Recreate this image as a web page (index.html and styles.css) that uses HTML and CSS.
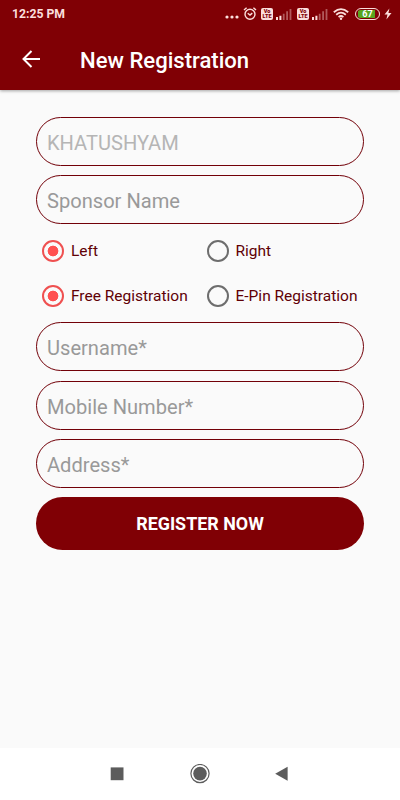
FILE: index.html
```html
<!DOCTYPE html>
<html lang="en">
<head>
    <meta charset="UTF-8">
    <title>New Registration</title>
    <link rel="stylesheet" href="styles.css">
</head>
<body>

    <header class="header">
        <div class="status-bar">
            <span class="time">12:25 PM</span>
            <div class="status-icons">
                <svg class="dots" width="14" height="14" viewBox="0 0 14 14">
                    <circle cx="2" cy="10" r="1.6"/><circle cx="7" cy="10" r="1.6"/><circle cx="12" cy="10" r="1.6"/>
                </svg>
                <svg class="alarm" width="14" height="14" viewBox="0 0 14 14">
                    <circle cx="7" cy="7.2" r="5"/>
                    <path d="M1 3 3.6.7M13 3 10.4.7M4.7 6.3 7 8.1 9.3 6.1"/>
                </svg>
                <span class="volte">Vo<br>LTE</span>
                <svg class="signal" width="16" height="14" viewBox="0 0 16 14">
                    <path d="M0 10h2v3H0zM3.4 8.8h2V13h-2z"/>
                    <path class="weak" d="M6.8 6.7h1.8V13H6.8zM10.2 4.2H12V13h-1.8zM13.6 2h1.8v11h-1.8z"/>
                </svg>
                <span class="volte second">Vo<br>LTE</span>
                <svg class="signal" width="16" height="14" viewBox="0 0 16 14">
                    <path d="M0 10h2v3H0zM3.4 8.8h2V13h-2z"/>
                    <path class="weak" d="M6.8 6.7h1.8V13H6.8zM10.2 4.2H12V13h-1.8zM13.6 2h1.8v11h-1.8z"/>
                </svg>
                <svg class="wifi" width="16" height="14" viewBox="0 0 16 14">
                    <path d="M.8 5.2Q8-1 15.2 5.2M3.2 7.7Q8 3.6 12.8 7.7M5.6 10.1Q8 8 10.4 10.1"/>
                    <circle cx="8" cy="11.8" r="1.2"/>
                </svg>
                <span class="battery">67</span>
                <svg class="bolt" width="8" height="12" viewBox="0 0 8 12">
                    <path d="M5.4.5.5 6.6h3L2.4 11.5 7.5 5.1H4.4z"/>
                </svg>
            </div>
        </div>
        <div class="title-bar">
            <svg class="back" width="20" height="20" viewBox="0 0 20 20">
                <path d="M19 10H2.5M10.5 2l-8 8 8 8"/>
            </svg>
            <h1>New Registration</h1>
        </div>
    </header>

    <form class="form">
        <input class="field filled" type="text" value="KHATUSHYAM" disabled>
        <input class="field" type="text" placeholder="Sponsor Name">
        <div class="options">
            <label><input type="radio" name="side" checked>Left</label>
            <label><input type="radio" name="side">Right</label>
            <label><input type="radio" name="type" checked>Free Registration</label>
            <label><input type="radio" name="type">E-Pin Registration</label>
        </div>
        <input class="field" type="text" placeholder="Username*">
        <input class="field" type="text" placeholder="Mobile Number*">
        <input class="field" type="text" placeholder="Address*">
        <button class="register" type="button">REGISTER NOW</button>
    </form>

    <!-- Android navigation keys -->
    <nav class="nav-bar">
        <svg width="20" height="20" viewBox="0 0 20 20"><path d="M3.7 3.4h12.8v12.8H3.7z"/></svg>
        <svg width="20" height="20" viewBox="0 0 20 20">
            <circle class="ring" cx="10" cy="9.6" r="9.1"/>
            <circle cx="10" cy="9.6" r="6.8"/>
        </svg>
        <svg width="20" height="20" viewBox="0 0 20 20"><path d="M3.2 9.7 15.6 2.8v14z"/></svg>
    </nav>

</body>
</html>
```
FILE: styles.css
```css
* {
    box-sizing: border-box;
}

body {
    margin: 0;
    height: 100vh;
    display: flex;
    flex-direction: column;
    background: #fafafa;
    font-family: Roboto, sans-serif;
    overflow: hidden;
}

.header {
    height: 90px;
    background: #800005;
    color: #fff;
    box-shadow: 0 1px 3px rgba(0, 0, 0, 0.35);
}

.status-bar {
    display: flex;
    justify-content: space-between;
    height: 28px;
    padding: 0 8px 0 12px;
    align-items: center;
    color: #fbdedc;
}

.time {
    font-size: 12.2px;
    font-weight: 700;
}

.status-icons {
    display: flex;
    align-items: center;
}

.status-icons svg {
    fill: #fbdedc;
}

.status-icons .alarm,
.status-icons .wifi {
    stroke: #fbdedc;
    stroke-width: 1.4;
}

.status-icons .alarm {
    fill: none;
    margin: 0 4px;
}

.wifi path {
    fill: none;
    stroke-width: 1.8;
}

.wifi circle {
    stroke: none;
}

.volte {
    width: 12px;
    height: 12px;
    padding-top: 1px;
    margin-right: 3px;
    border-radius: 2px;
    background: #fbdedc;
    color: #800005;
    font-size: 5.5px;
    line-height: 5px;
    font-weight: 900;
    text-align: center;
}

.volte.second {
    margin-left: 5px;
}

.signal .weak {
    opacity: 0.4;
}

.status-icons .wifi {
    margin: 0 6px 0 5px;
}

.battery {
    width: 25px;
    height: 12px;
    margin-right: 4px;
    padding: 1px;
    border: 1px solid #fbdedc;
    border-radius: 6px;
    background: linear-gradient(90deg, #800005 3%, #58a51f 3%, #58a51f 88%, #800005 88%) content-box;
    color: #fff;
    font-size: 9px;
    line-height: 9px;
    font-weight: 700;
    text-align: center;
}

.title-bar {
    display: flex;
    align-items: center;
    height: 61px;
    padding-left: 21px;
}

.back {
    fill: none;
    stroke: #fff;
    stroke-width: 2;
}

.title-bar h1 {
    margin: 3px 0 0 39px;
    font-size: 22.1px;
    font-weight: 500;
}

.form {
    flex: 1;
    display: flex;
    flex-direction: column;
    gap: 9.3px;
    padding: 26.6px 36px 0;
}

.field {
    width: 100%;
    height: 49.1px;
    padding: 3px 10px 0;
    border: 1px solid #720008;
    border-radius: 25px;
    background: none;
    color: #999;
    font-family: inherit;
    font-size: 20.1px;
}

.field::placeholder {
    color: #999;
}

.field.filled {
    color: #b5b5b5;
}

.options {
    display: grid;
    grid-template-columns: 164.5px 1fr;
    grid-auto-rows: 44.5px;
    height: 79px;
    margin-top: -4.5px;
    margin-bottom: 5px;
    padding-left: 6px;
}

.options label {
    display: flex;
    align-items: center;
    color: #600006;
    font-size: 15.5px;
    white-space: nowrap;
}

.options input {
    appearance: none;
    flex: none;
    width: 22px;
    height: 22px;
    margin: 0 7px 0 0;
    border: 2px solid #6d6d6d;
    border-radius: 50%;
}

.options input:checked {
    border-color: #ef5050;
    background: radial-gradient(circle, #ff5050 5px, transparent 5.7px);
}

.register {
    height: 53px;
    flex: none;
    border: none;
    border-radius: 26.5px;
    background: #800005;
    color: #fff;
    font-family: inherit;
    font-size: 17.9px;
    font-weight: 700;
}

.nav-bar {
    display: flex;
    justify-content: center;
    align-items: center;
    gap: 63px;
    height: 52.5px;
    padding-right: 1px;
    background: #fff;
}

.nav-bar svg {
    fill: #5c5c5c;
}

.nav-bar svg:last-child {
    margin-left: -1px;
}

.nav-bar .ring {
    fill: none;
    stroke: #5c5c5c;
    stroke-width: 1.2;
}
```
